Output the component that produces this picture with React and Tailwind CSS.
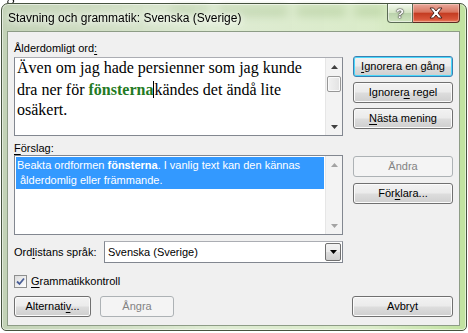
import React from "react";

const U = ({ children }) => (
  <span className="underline underline-offset-[2px] decoration-[1px]">{children}</span>
);

function Btn({ children, className = "", focused = false, disabled = false }) {
  let look =
    "border-[#707070] bg-[linear-gradient(#f2f2f2_0%,#ebebeb_48%,#dddddd_52%,#cfcfcf_100%)] text-black shadow-[inset_0_0_0_1px_#fbfbfb]";
  if (focused)
    look =
      "border-[#3c7fb1] bg-[linear-gradient(#f2f2f2_0%,#ebebeb_48%,#dddddd_52%,#cfcfcf_100%)] text-black shadow-[inset_0_0_0_1px_#48d8fb]";
  if (disabled) look = "border-[#adb2b5] bg-[#f4f4f4] text-[#838383]";
  return (
    <div
      className={`flex items-center justify-center rounded-[3px] border text-[11px] leading-none ${look} ${className}`}
    >
      <span className="whitespace-pre">{children}</span>
    </div>
  );
}

const Arrow = ({ up, color = "#000" }) => (
  <svg width="7" height="4" viewBox="0 0 7 4">
    {up ? (
      <path d="M0 4 L3.5 0 L7 4 Z" fill={color} />
    ) : (
      <path d="M0 0 L7 0 L3.5 4 Z" fill={color} />
    )}
  </svg>
);

function ScrollBar({ thumb, disabled }) {
  const c = disabled ? "#a3a3a3" : "#404040";
  return (
    <div className="flex w-[17px] shrink-0 flex-col items-center bg-[#f3f3f3] border-l border-[#e6e6e6]">
      <div className="flex h-[17px] w-full items-center justify-center">
        <Arrow up color={c} />
      </div>
      {thumb ? (
        <div className="mt-[1px] h-[16px] w-[14px] rounded-[2px] border border-[#979797] bg-[linear-gradient(90deg,#f2f2f2,#e2e2e2)] shadow-[inset_0_0_0_1px_#fafafa]" />
      ) : null}
      <div className="flex-1" />
      <div className="flex h-[17px] w-full items-center justify-center">
        <Arrow color={c} />
      </div>
    </div>
  );
}

export default function App() {
  return (
    <div className="relative h-[333px] w-[468px] overflow-hidden bg-white font-['Liberation_Sans',Arial,sans-serif]">
      {/* document behind the dialog */}
      <div className="mt-[-15px] whitespace-nowrap pl-[2px] font-['Liberation_Serif','Times_New_Roman',serif] text-[16px] leading-[20px] text-[#1a1a1a] blur-[0.6px]">
        igen i sådan ordbok. Det kan vara bra att notera. Hem se
      </div>
      <div className="ml-[170px] mt-[2px] flex gap-[8px] blur-[3px]">
        <div className="h-[9px] w-[40px] rounded bg-[#7f9e6a]" />
        <div className="h-[9px] w-[70px] rounded bg-[#7f9e6a]" />
        <div className="h-[9px] w-[50px] rounded bg-[#7f9e6a]" />
        <div className="h-[9px] w-[30px] rounded bg-[#7f9e6a]" />
      </div>

      {/* dialog window */}
      <div className="absolute left-[1px] top-[3px] flex h-[328px] w-[466px] flex-col rounded-t-[7px] rounded-b-[5px] border border-[#46533f] bg-[linear-gradient(90deg,rgba(186,204,172,0.88),rgba(214,230,200,0.8)_45%,rgba(208,230,186,0.78)_80%,rgba(184,222,146,0.88))] backdrop-blur-[3px] shadow-[inset_0_0_0_1px_rgba(255,255,255,0.55)]">
        {/* title bar */}
        <div className="flex h-[27px] shrink-0 items-start pl-[6px] pr-[6px]">
          <div className="self-center pt-[1px] text-[12px] leading-[14px] text-black [text-shadow:0_0_6px_#fff,0_0_10px_#fff]">
            Stavning och grammatik: Svenska (Sverige)
          </div>
          <div className="ml-auto flex h-[19px]">
            <div className="flex w-[26px] items-center justify-center rounded-bl-[4px] border border-t-0 border-[#5b6b55] bg-[linear-gradient(rgba(255,255,255,0.7),rgba(210,225,200,0.55)_50%,rgba(170,195,160,0.6)_52%,rgba(205,225,190,0.7))] shadow-[inset_0_0_0_1px_rgba(255,255,255,0.5)]">
              <span className="text-[13px] font-bold leading-none text-white [text-shadow:0_0_1px_#333,0_0_1px_#333,0_0_2px_#333]">
                ?
              </span>
            </div>
            <div className="flex w-[47px] items-center justify-center rounded-br-[4px] border border-l-0 border-t-0 border-[#5b2a22] bg-[linear-gradient(#e9a99c,#d9755f_45%,#c43c22_52%,#d8553a_85%,#e8845f)] shadow-[inset_0_0_0_1px_rgba(255,220,210,0.45)]">
              <svg width="14" height="12" viewBox="0 0 14 12">
                <path
                  d="M1 1 L4.5 1 L7 4 L9.5 1 L13 1 L9 6 L13 11 L9.5 11 L7 8 L4.5 11 L1 11 L5 6 Z"
                  fill="#fff"
                  stroke="#3a1a14"
                  strokeWidth="0.9"
                  strokeLinejoin="round"
                />
              </svg>
            </div>
          </div>
        </div>

        {/* client area */}
        <div className="mb-[4px] ml-[5px] mr-[6px] flex flex-1 flex-col border border-[#8d9c86] bg-[#f0f0f0] pl-[6px] pr-[6px] pt-[9px] text-[11px] text-black">
          <div className="flex">
            <div className="flex w-[329px] flex-col">
              <div className="h-[14px] leading-[14px]">
                Ålderdomligt ord<U>:</U>
              </div>
              <div className="mt-[2px] flex h-[79px] border border-[#828790] border-t-[#abadb3] bg-white">
                <div className="flex-1 whitespace-nowrap pl-[2px] font-['Liberation_Serif','Times_New_Roman',serif] text-[16px] leading-[20px] text-black">
                  <div>Även om jag hade persienner som jag kunde</div>
                  <div>
                    dra ner för <span className="font-bold text-[#237a23]">fönsterna</span>
                    <span className="inline-block h-[17px] w-[1px] translate-y-[3px] bg-black" />
                    kändes det ändå lite
                  </div>
                  <div>osäkert.</div>
                </div>
                <ScrollBar thumb />
              </div>
              <div className="mt-[5px] h-[14px] leading-[14px]">
                <U>F</U>örslag:
              </div>
              <div className="flex h-[80px] border border-[#828790] bg-white">
                <div className="flex-1 p-[1px]">
                  <div className="bg-[#3399ff] py-[1px] text-white">
                    <div className="whitespace-nowrap pl-[1px] leading-[15px]">
                      Beakta ordformen <span className="font-bold">fönsterna</span>. I vanlig text kan den kännas
                    </div>
                    <div className="whitespace-nowrap pl-[4px] leading-[15px]">
                      ålderdomlig eller främmande.
                    </div>
                  </div>
                </div>
                <ScrollBar disabled />
              </div>
            </div>

            <div className="ml-[10px] flex w-[100px] flex-col">
              <Btn focused className="mt-[15px] h-[21px]">
                <U>I</U>gnorera en gång
              </Btn>
              <Btn className="mt-[5px] h-[21px]">
                Ignorer<U>a</U> regel
              </Btn>
              <Btn className="mt-[5px] h-[21px]">
                <U>N</U>ästa mening
              </Btn>
              <Btn disabled className="mt-[27px] h-[21px]">
                Ändra
              </Btn>
              <Btn className="mt-[6px] h-[21px]">
                För<U>k</U>lara...
              </Btn>
            </div>
          </div>

          {/* language row */}
          <div className="mt-[6px] flex h-[22px] items-center">
            <div className="w-[90px]">
              Ord<U>l</U>istans språk:
            </div>
            <div className="flex h-full w-[239px] items-center border border-[#828790] border-t-[#abadb3] bg-white pl-[3px] pr-[1px]">
              <span className="flex-1">Svenska (Sverige)</span>
              <div className="flex h-[18px] w-[16px] items-center justify-center rounded-[2px] border border-[#707070] bg-[linear-gradient(#f2f2f2_0%,#ebebeb_48%,#dddddd_52%,#cfcfcf_100%)]">
                <Arrow />
              </div>
            </div>
          </div>

          {/* checkbox row */}
          <div className="mt-[12px] flex h-[13px] items-center">
            <div className="flex h-[13px] w-[13px] items-center justify-center border border-[#8e8f8f] bg-[linear-gradient(135deg,#dcdcdc,#ffffff)]">
              <svg width="9" height="9" viewBox="0 0 9 9">
                <path d="M1 4.5 L3.5 7 L8 1.5" fill="none" stroke="#4a5f97" strokeWidth="1.8" />
              </svg>
            </div>
            <span className="ml-[4px] leading-[13px]">
              <U>G</U>rammatikkontroll
            </span>
          </div>

          {/* bottom row */}
          <div className="mt-[8px] flex h-[21px]">
            <Btn className="w-[77px]">
              Alternati<U>v</U>...
            </Btn>
            <Btn disabled className="ml-[9px] w-[74px]">
              Ångra
            </Btn>
            <Btn className="ml-auto w-[101px]">Avbryt</Btn>
          </div>
        </div>
      </div>
    </div>
  );
}
